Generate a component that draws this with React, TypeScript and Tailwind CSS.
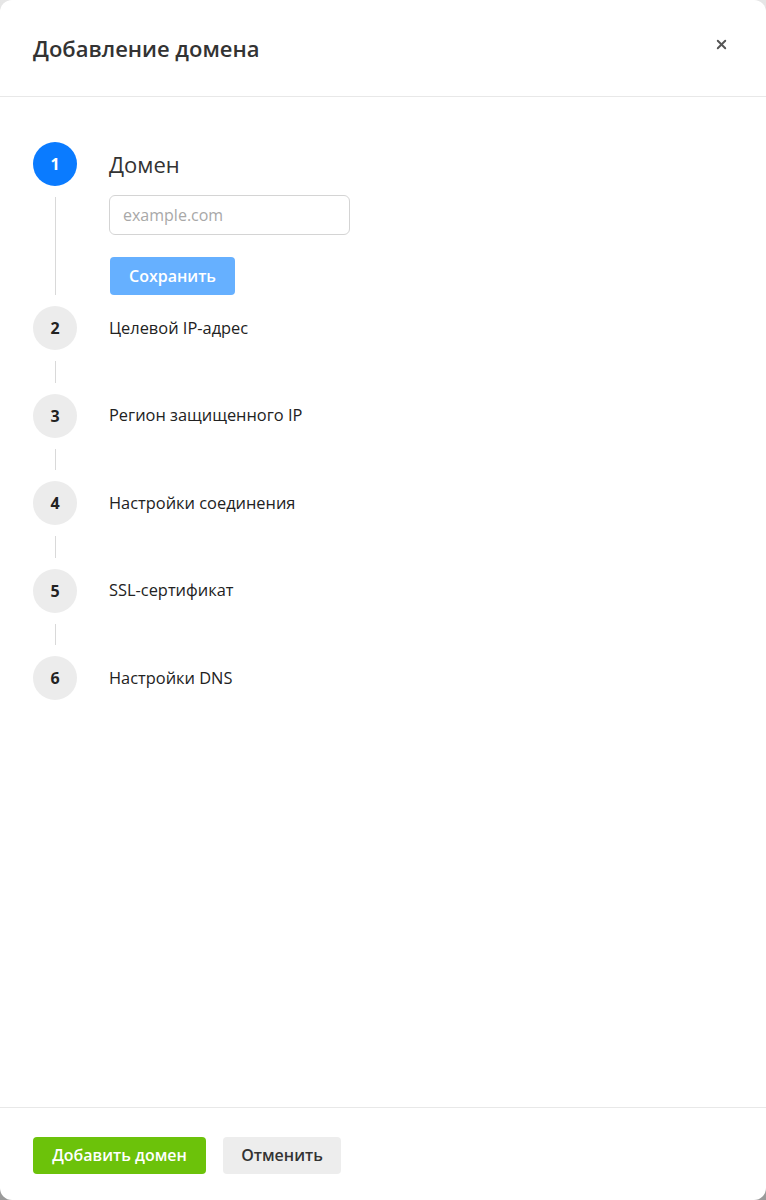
import { X } from 'lucide-react';

const steps = [
  'Целевой IP-адрес',
  'Регион защищенного IP',
  'Настройки соединения',
  'SSL-сертификат',
  'Настройки DNS',
];

function Connector({ grow }: { grow?: boolean }) {
  return (
    <div className={`flex w-[44px] justify-center py-[11px] ${grow ? 'flex-1' : ''}`}>
      <div className={`w-px bg-[#d9d9d9] ${grow ? 'h-full' : 'h-[21.5px]'}`} />
    </div>
  );
}

export default function App() {
  return (
    <div
      className="h-[1200px] bg-gradient-to-b from-[#e6e6e6] to-[#9a9a9a]"
      style={{ fontFamily: '"Open Sans", "Noto Sans", sans-serif' }}
    >
      <div className="flex h-full flex-col overflow-hidden rounded-[12px] bg-white">
        <header className="flex h-[97px] shrink-0 items-center justify-between border-b border-[#e8e8e8] px-[33px]">
          <h1 className="text-[22px] font-semibold text-[#333]">Добавление домена</h1>
          <button className="mr-[4px] mb-[8px] text-[#555]">
            <X size={15} strokeWidth={3} />
          </button>
        </header>

        <main className="flex-1 px-[33px] pt-[45px]">
          {/* step 1, active */}
          <div className="flex gap-[32px]">
            <div className="flex flex-col items-center">
              <div className="flex h-[44px] w-[44px] items-center justify-center rounded-full bg-[#0a7bff] text-[16px] font-bold text-white">
                1
              </div>
              <Connector grow />
            </div>
            <div className="flex flex-col pb-[11px]">
              <div className="flex h-[44px] items-center text-[22px] text-[#333]">Домен</div>
              <input
                placeholder="example.com"
                className="mt-[9px] h-[40px] w-[241px] rounded-[6px] border border-[#d4d4d4] px-[13px] text-[16px] text-[#333] placeholder:text-[#a8a8a8] outline-none"
              />
              <button className="mt-[22px] h-[38px] w-[125px] ml-px rounded-[4px] bg-[#66b0ff] text-[16px] font-semibold text-white">
                Сохранить
              </button>
            </div>
          </div>

          {steps.map((label, i) => (
            <div key={label} className="flex flex-col">
              <div className="flex items-center gap-[32px]">
                <div className="flex h-[44px] w-[44px] items-center justify-center rounded-full bg-[#ececec] text-[16px] font-bold text-[#222]">
                  {i + 2}
                </div>
                <span className="text-[16.4px] text-[#222]">{label}</span>
              </div>
              {i < steps.length - 1 && <Connector />}
            </div>
          ))}
        </main>

        <footer className="flex h-[93px] shrink-0 items-center gap-[17px] border-t border-[#e8e8e8] px-[33px] pt-[2px]">
          <button className="h-[37px] w-[173px] rounded-[4px] bg-[#6cc20a] text-[16px] font-semibold text-white">
            Добавить домен
          </button>
          <button className="h-[37px] w-[118px] rounded-[4px] bg-[#ededed] text-[16px] font-semibold text-[#333]">
            Отменить
          </button>
        </footer>
      </div>
    </div>
  );
}
